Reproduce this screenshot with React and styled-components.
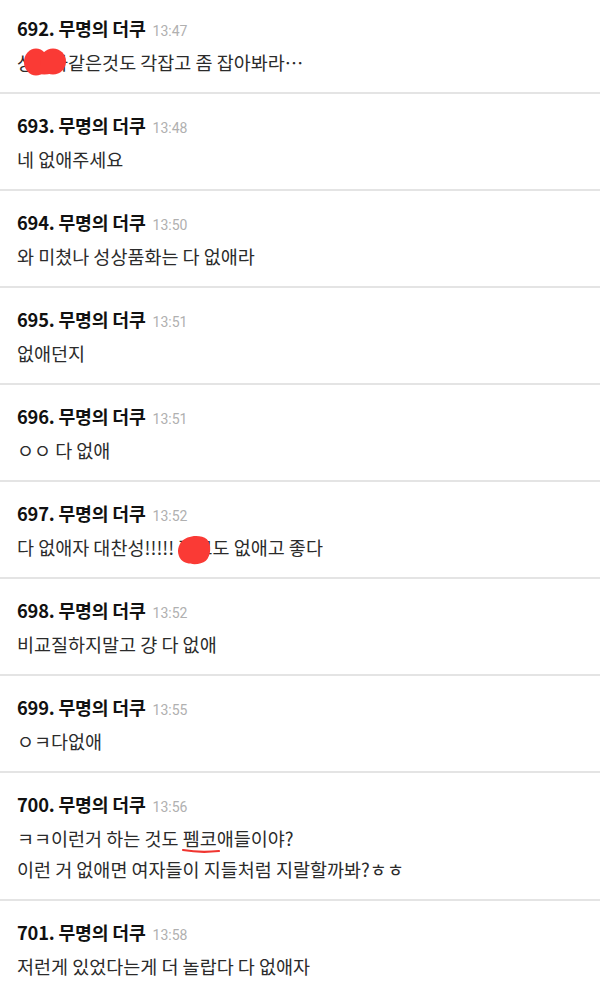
import styled, { createGlobalStyle } from "styled-components";

const GlobalStyle = createGlobalStyle`
  html, body {
    margin: 0;
    padding: 0;
    background: #fff;
  }
  body {
    font-family: "Noto Sans CJK KR", "Noto Sans", sans-serif;
    -webkit-font-smoothing: antialiased;
  }
`;

const comments = [
  { no: 692, time: "13:47", lines: [["상", { censor: "품화", blob: "heart" }, "같은것도 각잡고 좀 잡아봐라…"]] },
  { no: 693, time: "13:48", lines: [["네 없애주세요"]] },
  { no: 694, time: "13:50", lines: [["와 미쳤나 성상품화는 다 없애라"]] },
  { no: 695, time: "13:51", lines: [["없애던지"]] },
  { no: 696, time: "13:51", lines: [["ㅇㅇ 다 없애"]] },
  { no: 697, time: "13:52", lines: [["다 없애자 대찬성!!!!! ", { censor: "펨코", blob: "oval" }, "도 없애고 좋다"]] },
  { no: 698, time: "13:52", lines: [["비교질하지말고 걍 다 없애"]] },
  { no: 699, time: "13:55", lines: [["ㅇㅋ다없애"]] },
  {
    no: 700,
    time: "13:56",
    lines: [
      ["ㅋㅋ이런거 하는 것도 ", { mark: "펨코" }, "애들이야?"],
      ["이런 거 없애면 여자들이 지들처럼 지랄할까봐?ㅎㅎ"],
    ],
  },
  { no: 701, time: "13:58", lines: [["저런게 있었다는게 더 놀랍다 다 없애자"]] },
];

const List = styled.div`
  display: flex;
  flex-direction: column;
`;

const Post = styled.div`
  padding: ${({ $first }) => ($first ? "16px" : "19px")} 17px 14px;
  border-bottom: 2px solid #e4e4e4;

  &:last-child {
    border-bottom: none;
  }
`;

const Header = styled.div`
  display: flex;
  align-items: baseline;
  gap: 7px;
  height: 24px;
  line-height: 24px;
`;

const Name = styled.span`
  font-size: 18.3px;
  font-weight: 700;
  color: #111;
  letter-spacing: -0.2px;
`;

const Time = styled.span`
  font-family: "Roboto", "Noto Sans", sans-serif;
  font-size: 14px;
  color: #b0b0b0;
`;

const Body = styled.div`
  margin-top: 7px;
`;

const Line = styled.div`
  font-size: 18.5px;
  line-height: 31px;
  color: #2b2b2b;
  white-space: pre;
`;

const Censor = styled.span`
  position: relative;
`;

const Blob = styled.svg`
  position: absolute;
  left: ${({ $left }) => $left}px;
  top: ${({ $top }) => $top}px;
  width: ${({ $w }) => $w}px;
  height: ${({ $h }) => $h}px;
  overflow: visible;
`;

const Marked = styled.span`
  position: relative;
`;

const Underline = styled.svg`
  position: absolute;
  left: -1px;
  bottom: -3px;
  width: 38px;
  height: 6px;
  overflow: visible;
`;

function Segment({ part }) {
  if (typeof part === "string") return part;
  if (part.censor) {
    return (
      <Censor>
        {part.censor}
        {part.blob === "heart" ? (
          <Blob $left={-10} $top={-1} $w={42} $h={29} viewBox="0 0 42 29">
            <ellipse cx="12" cy="14" rx="12" ry="13.5" fill="#fa3a35" />
            <ellipse cx="29" cy="13.5" rx="13" ry="13" fill="#fa3a35" />
            <path d="M6 22 Q20 31 35 22 L31 18 L10 18 Z" fill="#fa3a35" />
          </Blob>
        ) : (
          <Blob $left={-1} $top={0} $w={34} $h={31} viewBox="0 0 33 30">
            <path
              d="M4 8 C9 1 23 0 29 5 C34 10 33 21 28 26 C22 31 9 30 4 25 C0 20 0 13 4 8 Z"
              fill="#fa3a35"
            />
          </Blob>
        )}
      </Censor>
    );
  }
  if (part.mark) {
    return (
      <Marked>
        {part.mark}
        <Underline viewBox="0 0 38 6">
          <path d="M1 2 Q18 5 37 3" stroke="#f03530" strokeWidth="2.2" fill="none" strokeLinecap="round" />
        </Underline>
      </Marked>
    );
  }
  return null;
}

const App = () => {
  return (
    <>
      <GlobalStyle />
      <List>
        {comments.map((c, i) => (
          <Post key={c.no} $first={i === 0}>
            <Header>
              <Name>{c.no}. 무명의 더쿠</Name>
              <Time>{c.time}</Time>
            </Header>
            <Body>
              {c.lines.map((line, j) => (
                <Line key={j}>
                  {line.map((part, k) => (
                    <Segment key={k} part={part} />
                  ))}
                </Line>
              ))}
            </Body>
          </Post>
        ))}
      </List>
    </>
  );
};

export default App;
